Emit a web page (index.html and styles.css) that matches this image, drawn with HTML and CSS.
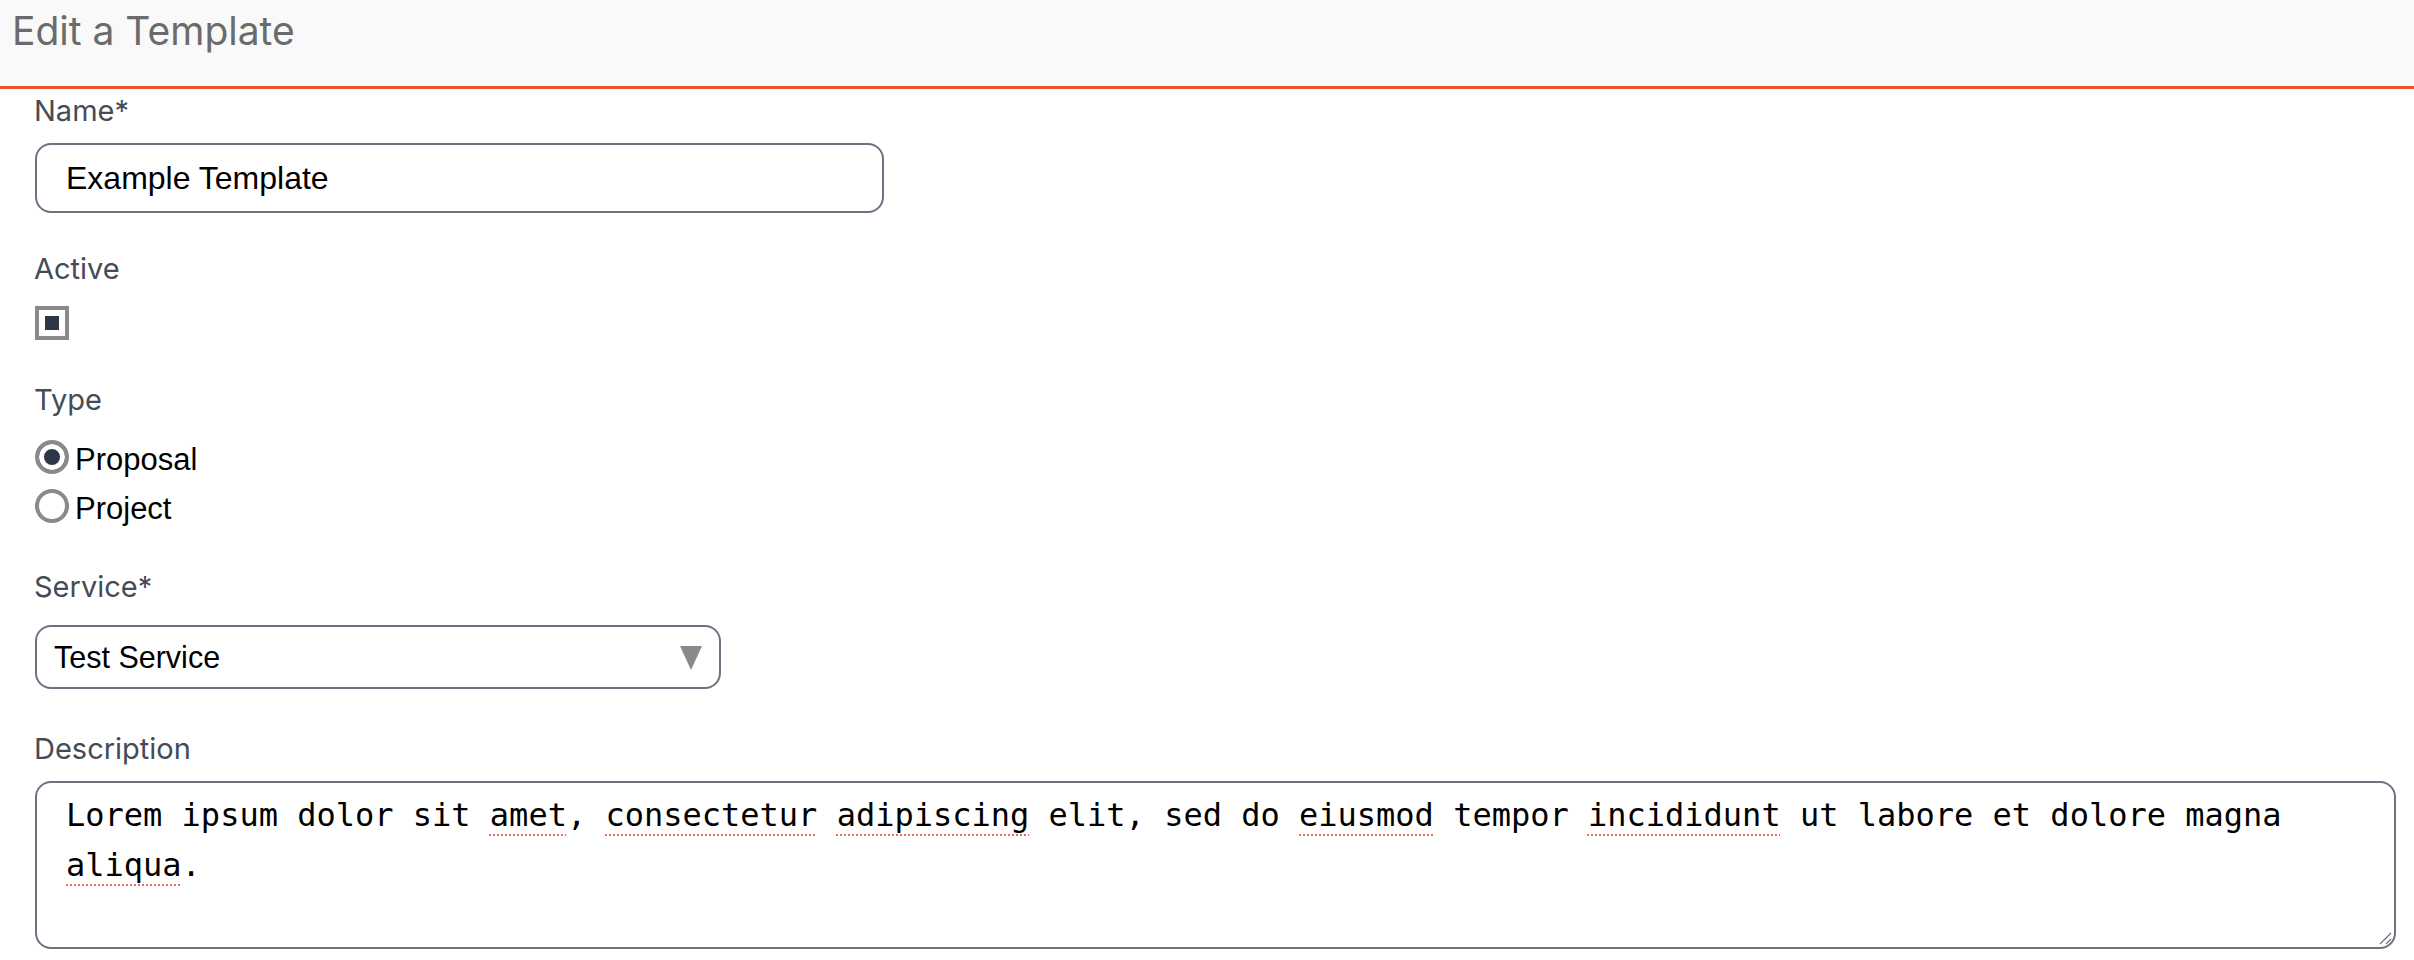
FILE: index.html
```html
<!DOCTYPE html>
<html lang="en">
<head>
<meta charset="utf-8">
<title>Edit a Template</title>
<link rel="stylesheet" href="styles.css">
</head>
<body>
<header class="page-header">
  <h1 class="page-title">Edit a Template</h1>
</header>
<form class="form">
  <div class="field field-name">
    <label class="label" for="name">Name*</label>
    <input class="text-input" id="name" type="text" value="Example Template">
  </div>
  <div class="field field-active">
    <span class="label">Active</span>
    <input class="checkbox" type="checkbox" checked aria-label="Active">
  </div>
  <div class="field field-type">
    <span class="label">Type</span>
    <div class="radios">
      <label class="radio-row"><input class="radio" type="radio" name="type" checked><span>Proposal</span></label>
      <label class="radio-row"><input class="radio" type="radio" name="type"><span>Project</span></label>
    </div>
  </div>
  <div class="field field-service">
    <span class="label">Service*</span>
    <div class="select" role="combobox" aria-expanded="false">
      <span class="select-value">Test Service</span>
      <svg class="select-arrow" width="22" height="24" viewBox="0 0 22 24"><polygon points="0,0 22,0 11,24" fill="#8a8a8a"/></svg>
    </div>
  </div>
  <div class="field field-desc">
    <span class="label">Description</span>
    <div class="textarea" role="textbox" aria-multiline="true">Lorem ipsum dolor sit <span class="sp">amet</span>, <span class="sp">consectetur</span> <span class="sp">adipiscing</span> elit, sed do <span class="sp">eiusmod</span> tempor <span class="sp">incididunt</span> ut labore et dolore magna <span class="sp">aliqua</span>.<svg class="grip" width="16" height="16" viewBox="0 0 16 16"><path d="M15 4 L4 15 M15 10 L10 15" stroke="#777" stroke-width="1.4" fill="none"/></svg></div>
  </div>
</form>
</body>
</html>
```
FILE: styles.css
```css
html, body {
  margin: 0;
  padding: 0;
  background: #ffffff;
}

body {
  font-family: "Inter", "Noto Sans", sans-serif;
  color: #464b57;
}

.page-header {
  height: 86px;
  background: #f9f9f9;
  border-bottom: 3px solid #e8522f;
  box-sizing: content-box;
  padding: 0 12px;
}

.page-title {
  margin: 0;
  padding-top: 8px;
  font-size: 39px;
  line-height: 46px;
  font-weight: 400;
  color: #6b6b6b;
}

.form {
  padding: 4px 18px 0 35px;
  display: flex;
  flex-direction: column;
}

.field {
  display: flex;
  flex-direction: column;
  align-items: flex-start;
}

.label {
  font-size: 29px;
  line-height: 36px;
  color: #464b57;
  margin-left: -1px;
}

.field-name .label { margin-bottom: 14px; }
.field-active { margin-top: 38px; }
.field-active .label { margin-bottom: 19px; }
.field-type { margin-top: 42px; }
.field-type .label { margin-bottom: 22px; }
.field-service { margin-top: 46px; }
.field-service .label { margin-bottom: 20px; }
.field-desc { margin-top: 42px; }
.field-desc .label { margin-bottom: 14px; }

.text-input {
  box-sizing: border-box;
  width: 849px;
  height: 70px;
  margin: 0;
  padding: 0 29px;
  border: 2px solid #6b7280;
  border-radius: 16px;
  font-family: "Liberation Sans", Arial, sans-serif;
  font-size: 32px;
  color: #000;
  background: #fff;
  outline: none;
}

.checkbox {
  appearance: none;
  -webkit-appearance: none;
  box-sizing: border-box;
  width: 34px;
  height: 34px;
  margin: 0;
  border: 4px solid #8a8a8a;
  background: #2d3748;
  box-shadow: inset 0 0 0 6px #ffffff;
}

.radios {
  display: flex;
  flex-direction: column;
  gap: 15px;
}

.radio-row {
  display: flex;
  align-items: center;
  gap: 6px;
  font-family: "Liberation Sans", Arial, sans-serif;
  font-size: 31px;
  line-height: 34px;
  color: #000;
}

.radio-row span {
  position: relative;
  top: 3px;
}

.radio {
  appearance: none;
  -webkit-appearance: none;
  box-sizing: border-box;
  width: 34px;
  height: 34px;
  margin: 0;
  border: 4px solid #8a8a8a;
  border-radius: 50%;
  background: #fff;
}

.radio:checked {
  background: #2d3748;
  box-shadow: inset 0 0 0 5px #ffffff;
}

.select {
  box-sizing: border-box;
  width: 686px;
  height: 64px;
  border: 2px solid #6b7280;
  border-radius: 16px;
  display: flex;
  align-items: center;
  justify-content: space-between;
  padding: 0 17px 0 17px;
  background: #fff;
}

.select-value {
  font-family: "Liberation Sans", Arial, sans-serif;
  font-size: 30.5px;
  color: #000;
}

.select-arrow {
  display: block;
  margin-top: 2px;
}

.textarea {
  position: relative;
  box-sizing: border-box;
  align-self: stretch;
  height: 168px;
  border: 2px solid #6b7280;
  border-radius: 16px;
  padding: 7px 29px 10px;
  font-family: "DejaVu Sans Mono", "Liberation Mono", monospace;
  font-size: 32px;
  line-height: 50px;
  color: #000;
  background: #fff;
}

.sp {
  text-decoration: underline dotted #ec6a5e;
  text-decoration-thickness: 2px;
  text-underline-offset: 8px;
}

.grip {
  position: absolute;
  right: 2px;
  bottom: 2px;
}
```
